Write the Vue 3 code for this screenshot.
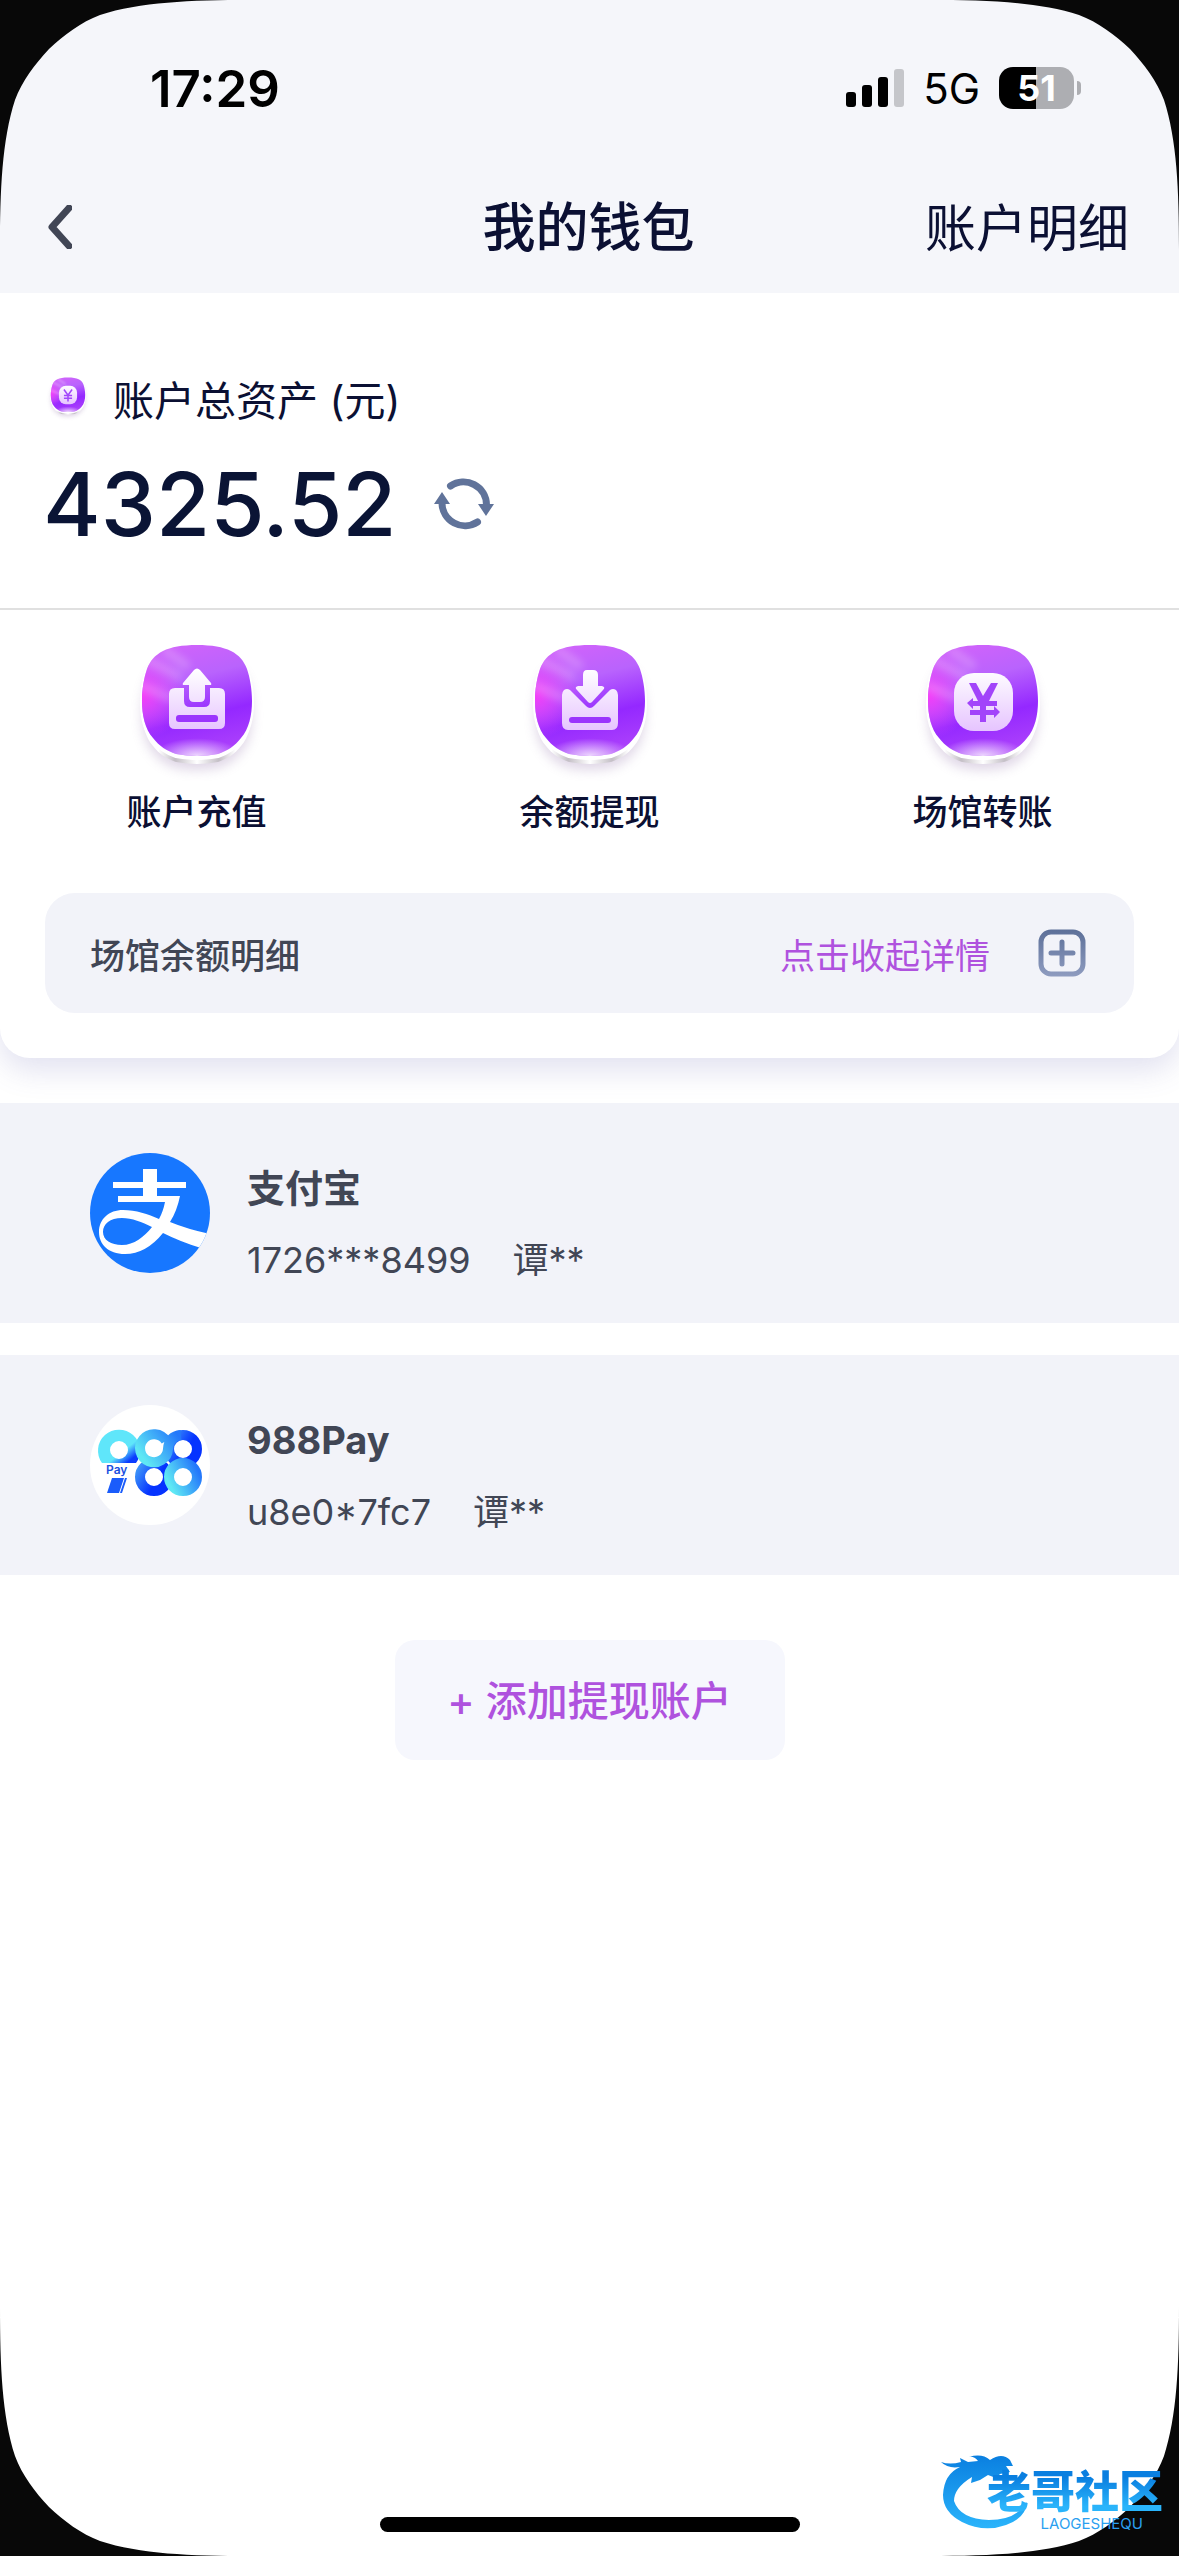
<template>
  <div class="page">
    <!-- 公用渐变与图标底座 -->
    <svg class="defs" aria-hidden="true">
      <defs>
        <linearGradient id="tile-fill" x1="0.35" y1="0" x2="0.6" y2="1">
          <stop offset="0" stop-color="#cf63fb" />
          <stop offset="0.3" stop-color="#b963fd" />
          <stop offset="0.65" stop-color="#9428ff" />
          <stop offset="1" stop-color="#ad42fb" />
        </linearGradient>
        <radialGradient id="tile-pink" cx="0" cy="0.45" r="0.4">
          <stop offset="0" stop-color="#f53cf8" />
          <stop offset="1" stop-color="#e050fb" stop-opacity="0" />
        </radialGradient>
        <radialGradient id="tile-glow" cx="0.5" cy="1" r="0.4" gradientTransform="matrix(1 0 0 0.4 0 0.6)">
          <stop offset="0" stop-color="#fff" stop-opacity="0.8" />
          <stop offset="1" stop-color="#fff" stop-opacity="0" />
        </radialGradient>
        <linearGradient id="tile-rim" x1="0" y1="0" x2="1" y2="0">
          <stop offset="0.15" stop-color="#fff" />
          <stop offset="0.3" stop-color="#c4bfc6" />
          <stop offset="0.5" stop-color="#fff" />
          <stop offset="0.7" stop-color="#c4bfc6" />
          <stop offset="0.85" stop-color="#fff" />
        </linearGradient>
        <linearGradient id="glyph-fill" x1="0" y1="38" x2="0" y2="100" gradientUnits="userSpaceOnUse">
          <stop offset="0" stop-color="#fff" />
          <stop offset="1" stop-color="#e6c4ff" />
        </linearGradient>
        <filter id="soft" x="-30%" y="-30%" width="160%" height="160%">
          <feGaussianBlur stdDeviation="6" />
        </filter>
        <filter id="streak" x="-50%" y="-50%" width="200%" height="200%">
          <feGaussianBlur stdDeviation="4" />
        </filter>
        <path
          id="tile-shape"
          d="M80 14C95 14 106 16 114 20C122 24 127 30 130 38C133 47 135 58 135 70C135 84 132 98 124 107C118 115 110 120 101 123C94 124 87 125 80 125C73 125 66 124 59 123C50 120 42 115 36 107C28 98 25 84 25 70C25 58 27 47 30 38C33 30 38 24 46 20C54 16 65 14 80 14Z"
        />
        <clipPath id="tile-clip"><use href="#tile-shape" /></clipPath>
        <g id="tile">
          <use href="#tile-shape" y="14" fill="#8f6fa8" opacity="0.28" filter="url(#soft)" />
          <use href="#tile-shape" y="8" fill="url(#tile-rim)" />
          <use href="#tile-shape" y="2" fill="#fff" stroke="#fff" stroke-width="4" />
          <use href="#tile-shape" fill="url(#tile-fill)" />
          <use href="#tile-shape" fill="url(#tile-pink)" />
          <g clip-path="url(#tile-clip)" stroke="#fff" stroke-width="7" opacity="0.26" fill="none">
            <path d="M28 28L64 46M22 54L56 68M46 18L72 36" filter="url(#streak)" />
          </g>
          <use href="#tile-shape" fill="url(#tile-glow)" />
        </g>
        <linearGradient id="plus-stroke" x1="0" y1="0" x2="0" y2="48" gradientUnits="userSpaceOnUse">
          <stop offset="0" stop-color="#5c6f98" />
          <stop offset="1" stop-color="#8f9cc0" />
        </linearGradient>
        <linearGradient id="ring-nine" x1="0" y1="0" x2="1" y2="1">
          <stop offset="0.62" stop-color="#5fe6fa" />
          <stop offset="0.84" stop-color="#0a3cff" />
        </linearGradient>
        <linearGradient id="ring-light" x1="0" y1="0.7" x2="1" y2="0.2">
          <stop offset="0" stop-color="#5fe8f4" />
          <stop offset="1" stop-color="#2478fb" />
        </linearGradient>
        <linearGradient id="ring-dark" x1="0" y1="0" x2="1" y2="0.6">
          <stop offset="0" stop-color="#3f97f8" />
          <stop offset="0.7" stop-color="#0533ff" />
        </linearGradient>
        <linearGradient id="dragon-fill" x1="0" y1="0" x2="0" y2="1">
          <stop offset="0" stop-color="#0a7fe0" />
          <stop offset="1" stop-color="#2ab4fb" />
        </linearGradient>
      </defs>
    </svg>

    <header class="top">
      <div class="status-bar">
        <span class="time">17:29</span>
        <div class="status-right">
          <svg class="signal" viewBox="0 0 58 38" aria-hidden="true">
            <rect x="0" y="23" width="10" height="15" rx="3" />
            <rect x="16" y="16" width="10" height="22" rx="3" />
            <rect x="32" y="8" width="10" height="30" rx="3" />
            <rect x="48" y="0" width="10" height="38" rx="3" fill="#c5c6ca" />
          </svg>
          <span class="network">5G</span>
          <div class="battery"><span class="battery-body">51</span><i class="battery-cap"></i></div>
        </div>
      </div>
      <nav class="nav-bar">
        <button class="back" type="button" aria-label="返回">
          <svg viewBox="0 0 24 44" aria-hidden="true">
            <path d="M21 3L4 22L21 41" />
          </svg>
        </button>
        <h1>我的钱包</h1>
        <a class="nav-link" href="#">账户明细</a>
      </nav>
    </header>

    <section class="wallet">
      <div class="asset">
        <div class="asset-label">
          <svg viewBox="0 0 160 160" aria-hidden="true">
            <use href="#tile" />
            <rect x="51" y="41" width="58" height="59" rx="22" fill="url(#glyph-fill)" />
            <path class="yen" d="M67 53L80 71L93 53M80 71V91M67 72H93M67 81H93" />
          </svg>
          <span>账户总资产 (元)</span>
        </div>
        <div class="asset-value">
          <strong>{{ balance }}</strong>
          <button class="refresh" type="button" aria-label="刷新余额">
            <svg viewBox="0 0 68 66" aria-hidden="true">
              <path class="arc" d="M20.5 15A23 23 0 0 1 56.5 34M47.5 51A23 23 0 0 1 12 32" />
              <path class="head" d="M48 33H64L56 45ZM4 33H20L12 21Z" />
            </svg>
          </button>
        </div>
      </div>

      <div class="actions">
        <button v-for="item in actions" :key="item.type" class="action" type="button">
          <svg viewBox="0 0 160 152" aria-hidden="true">
            <use href="#tile" />
            <g v-if="item.type === 'deposit'" fill="url(#glyph-fill)">
              <path d="M58 57H67V70Q67 76 73 76H87Q93 76 93 70V57H102Q108 57 108 63V92Q108 98 102 98H58Q52 98 52 92V63Q52 57 58 57Z" />
              <path d="M77 39Q80 36 83 39L94 52Q95 54 93 54H88V66Q88 71 83 71H77Q72 71 72 66V54H67Q65 54 66 52Z" />
              <rect class="slot" x="59" y="84" width="42" height="7" rx="3" />
            </g>
            <g v-else-if="item.type === 'withdraw'" fill="url(#glyph-fill)">
              <path d="M60 59L76 75Q80 79 84 75L100 59Q103 57 106 59Q108 61 108 64V92Q108 99 102 99H58Q52 99 52 92V64Q52 61 54 59Q57 57 60 59Z" />
              <path d="M77 39H83Q88 39 88 44V55H92Q96 56 93 59L82 71Q80 73 78 71L67 59Q64 56 68 55H73V44Q73 39 77 39Z" />
              <rect class="slot" x="59" y="86" width="42" height="6" rx="3" />
            </g>
            <g v-else>
              <rect x="51" y="42" width="59" height="58" rx="20" fill="url(#glyph-fill)" />
              <path class="transfer" d="M66 52H73L80 65L88 52H95L86 70H94V75H83V79H91V75L97 81L91 87V84H83V91H77V84H67V79H77V75H70V78L64 72L70 67V70H75Z" />
            </g>
          </svg>
          <span>{{ item.label }}</span>
        </button>
      </div>

      <div class="venue">
        <span class="venue-title">场馆余额明细</span>
        <button class="venue-toggle" type="button">
          <span>点击收起详情</span>
          <svg viewBox="0 0 48 48" aria-hidden="true">
            <rect x="3" y="3" width="42" height="42" rx="10" />
            <path d="M24 13V35M13 24H35" />
          </svg>
        </button>
      </div>
    </section>

    <main>
      <ul class="accounts">
        <li v-for="account in accounts" :key="account.id" class="account">
          <svg v-if="account.id === 'alipay'" class="avatar alipay" viewBox="0 0 120 120" aria-hidden="true">
            <path
              fill="#fff"
              fill-rule="evenodd"
              d="M53 16H67V29H96V35H67V43H90Q87 58 80 69Q97 76 120 81L111 95Q91 89 73 80Q56 101 35 101C18 101 9 91 9 79C9 66 19 57 33 57C46 57 58 61 69 66Q73 59 75 49H28V43H53V35H23V29H53ZM62 74C52 69 42 65 32 65C20 65 13 71 13 79C13 87 21 92 32 92C44 92 54 84 62 74Z"
            />
          </svg>
          <svg v-else class="avatar pay" viewBox="0 0 120 120" aria-hidden="true">
            <path
              fill="url(#ring-nine)"
              fill-rule="evenodd"
              d="M12 58A21 21 0 1 1 46 58ZM38 45A9 9 0 1 0 20 45A9 9 0 1 0 38 45Z"
            />
            <g fill="none" stroke-width="10">
              <circle cx="64" cy="72" r="14" stroke="url(#ring-dark)" />
              <circle cx="93" cy="44" r="14" stroke="url(#ring-dark)" />
              <circle cx="93" cy="72" r="14" stroke="url(#ring-light)" />
              <path d="M76 36A14 14 0 1 0 78 44Q79 31 91 30" stroke="url(#ring-light)" />
            </g>
            <text x="16" y="69">Pay</text>
            <path fill="#1a5cfb" d="M22 73H34L29 88H17ZM35 73H37L32 88H30Z" />
          </svg>
          <div class="account-info">
            <h2>{{ account.name }}</h2>
            <p><span>{{ account.number }}</span><span>{{ account.owner }}</span></p>
          </div>
        </li>
      </ul>
      <button class="add-account" type="button">+ 添加提现账户</button>
    </main>

    <div class="home-indicator"></div>

    <!-- 屏幕圆角 -->
    <svg v-for="corner in corners" :key="corner" class="corner" :class="corner" viewBox="0 0 250 250" aria-hidden="true">
      <path d="M0 0V250C0 190 2 140 15 100C22 81 35 64 49 49C64 35 81 22 100 15C140 2 190 0 250 0Z" />
    </svg>

    <!-- 社区水印 -->
    <div class="watermark">
      <svg viewBox="0 0 96 80" aria-hidden="true">
        <path
          fill="url(#dragon-fill)"
          d="M1 10Q10 13 21 10L20 6L28 10L38 9Q34 4 29 5Q42 1 50 8Q62 0 70 8L73 14L66 14L70 20L60 22L56 26L48 23L40 28L31 31L32 25Q14 36 14 49Q20 67 49 68Q76 68 87 50Q86 66 66 73Q44 81 22 70Q3 60 3 43Q4 22 20 15Q8 17 1 10Z"
        />
      </svg>
      <div class="watermark-text">
        <b>老哥社区</b>
        <small>LAOGESHEQU</small>
      </div>
    </div>
  </div>
</template>

<script setup>
import { ref } from 'vue'

const balance = ref('4325.52')

// 快捷操作
const actions = [
  { type: 'deposit', label: '账户充值' },
  { type: 'withdraw', label: '余额提现' },
  { type: 'transfer', label: '场馆转账' }
]

// 提现账户
const accounts = ref([
  { id: 'alipay', name: '支付宝', number: '1726***8499', owner: '谭**' },
  { id: '988pay', name: '988Pay', number: 'u8e0*7fc7', owner: '谭**' }
])

const corners = ['top-left', 'top-right', 'bottom-left', 'bottom-right']
</script>

<style>
body {
  background: #fff;
}
</style>

<style scoped>
.page {
  position: relative;
  display: flex;
  flex-direction: column;
  min-height: 100vh;
  overflow: hidden;
  background: #fff;
  color: #0b1033;
  font-family: Inter, "Noto Sans CJK SC", sans-serif;
}

.defs {
  position: absolute;
  width: 0;
  height: 0;
}

button {
  padding: 0;
  border: none;
  background: none;
  color: inherit;
  font: inherit;
  cursor: pointer;
}

svg {
  display: block;
  flex: none;
}

/* 顶部 */
.top {
  position: relative;
  z-index: 1;
  background: #f5f6fa;
}

.status-bar {
  display: flex;
  align-items: center;
  justify-content: space-between;
  height: 144px;
  padding: 16px 98px 0 150px;
  color: #000;
}

.time {
  font-size: 51px;
  font-weight: 600;
}

.status-right {
  display: flex;
  align-items: center;
  gap: 19px;
}

.signal {
  width: 58px;
  height: 38px;
}

.network {
  font-size: 42px;
}

.battery {
  display: flex;
  align-items: center;
  gap: 3px;
}

.battery-body {
  width: 75px;
  height: 42px;
  border-radius: 14px;
  background: linear-gradient(90deg, #000 50%, #adaeb2 50%);
  color: #fff;
  font-size: 36px;
  font-weight: 700;
  line-height: 42px;
  text-align: center;
}

.battery-cap {
  width: 4px;
  height: 14px;
  border-radius: 0 4px 4px 0;
  background: #adaeb2;
}

.nav-bar {
  display: grid;
  grid-template-columns: 1fr auto 1fr;
  align-items: center;
  height: 133px;
  padding: 0 50px 0 48px;
}

.back {
  justify-self: start;
}

.back svg {
  width: 24px;
  height: 44px;
}

.back path {
  fill: none;
  stroke: #414655;
  stroke-width: 7;
  stroke-linecap: round;
  stroke-linejoin: round;
}

h1 {
  margin: 0;
  padding-bottom: 6px;
  font-size: 53px;
  font-weight: 500;
}

.nav-link {
  justify-self: end;
  padding-bottom: 4px;
  color: inherit;
  font-size: 51px;
  text-decoration: none;
}

/* 钱包卡片 */
.wallet {
  padding-bottom: 45px;
  border-radius: 0 0 30px 30px;
  background: #fff;
  box-shadow: 0 12px 30px rgba(88, 88, 170, 0.18);
}

.asset {
  display: flex;
  flex-direction: column;
  gap: 18px;
  padding: 73px 43px 48px;
  border-bottom: 2px solid #e0e0e0;
}

.asset-label {
  display: flex;
  align-items: center;
  gap: 20px;
  height: 64px;
  font-size: 41px;
}

.asset-label svg {
  width: 50px;
  height: 50px;
}

.asset-label .yen {
  fill: none;
  stroke: #a347fb;
  stroke-width: 5;
}

.asset-value {
  display: flex;
  align-items: center;
  gap: 33px;
  height: 112px;
}

.asset-value strong {
  color: #0a1435;
  font-size: 88px;
  font-weight: 500;
  line-height: 112px;
}

.refresh svg {
  width: 68px;
  height: 66px;
}

.refresh .arc {
  fill: none;
  stroke: #60739a;
  stroke-width: 7;
  stroke-linecap: round;
}

.refresh .head {
  fill: #60739a;
}

.actions {
  display: grid;
  grid-template-columns: repeat(3, 1fr);
  padding: 21px 0 52px;
}

.action {
  display: flex;
  flex-direction: column;
  align-items: center;
  font-size: 35px;
  font-weight: 500;
  line-height: 58px;
}

.action svg {
  width: 160px;
  height: 152px;
  overflow: visible;
}

.action .slot {
  fill: #9b34fd;
}

.action .transfer {
  fill: #a244fa;
}

.venue {
  display: flex;
  align-items: center;
  justify-content: space-between;
  height: 120px;
  margin: 0 45px;
  padding: 0 48px 0 45px;
  border-radius: 30px;
  background: #f2f3f9;
  color: #414655;
  font-size: 35px;
}

.venue-title {
  font-weight: 500;
}

.venue-toggle {
  display: flex;
  align-items: center;
  gap: 48px;
  color: #af52de;
}

.venue-toggle svg {
  width: 48px;
  height: 48px;
  fill: none;
  stroke: url(#plus-stroke);
  stroke-width: 5;
  stroke-linecap: round;
}

/* 提现账户 */
main {
  display: flex;
  flex-direction: column;
  align-items: center;
  gap: 65px;
  padding-top: 45px;
}

.accounts {
  display: flex;
  flex-direction: column;
  gap: 32px;
  width: 100%;
  margin: 0;
  padding: 0;
  list-style: none;
}

.account {
  display: flex;
  align-items: center;
  gap: 37px;
  height: 220px;
  padding: 0 90px;
  box-sizing: border-box;
  background: #f2f3f9;
  color: #414655;
}

.avatar {
  width: 120px;
  height: 120px;
  border-radius: 50%;
}

.alipay {
  background: #1777ff;
}

.pay {
  background: #fff;
}

.pay text {
  fill: #1a4fe0;
  font-size: 12px;
  font-weight: 600;
}

.account-info {
  display: flex;
  flex-direction: column;
  gap: 16px;
  padding-top: 22px;
}

h2 {
  margin: 0;
  font-size: 38px;
  font-weight: 700;
  line-height: 56px;
}

.account-info p {
  display: flex;
  gap: 42px;
  margin: 0;
  font-size: 36px;
  line-height: 56px;
}

.add-account {
  width: 390px;
  height: 120px;
  padding-bottom: 4px;
  border-radius: 20px;
  background: #f6f7fd;
  color: #af52de;
  font-size: 41px;
  font-weight: 500;
}

.home-indicator {
  align-self: center;
  width: 420px;
  height: 15px;
  margin: auto 0 24px;
  border-radius: 8px;
  background: #000;
}

/* 屏幕圆角 */
.corner {
  position: absolute;
  z-index: 2;
  width: 250px;
  height: 250px;
  fill: #080808;
  pointer-events: none;
}

.top-left {
  top: 0;
  left: 0;
}

.top-right {
  top: 0;
  right: 0;
  transform: scaleX(-1);
}

.bottom-left {
  bottom: 0;
  left: 0;
  transform: scaleY(-1);
}

.bottom-right {
  right: 0;
  bottom: 0;
  transform: scale(-1);
}

/* 水印 */
.watermark {
  position: absolute;
  right: 16px;
  bottom: 24px;
  z-index: 3;
  display: flex;
  align-items: flex-end;
  pointer-events: none;
}

.watermark svg {
  width: 96px;
  height: 80px;
  margin-right: -49px;
}

.watermark-text {
  display: flex;
  flex-direction: column;
  align-items: flex-end;
}

.watermark b {
  background: linear-gradient(#0a7fe0 20%, #2ab4fb 80%);
  background-clip: text;
  color: transparent;
  font-size: 44px;
  font-weight: 900;
  line-height: 48px;
}

.watermark small {
  padding-right: 20px;
  color: #2b9ff0;
  font-size: 15px;
  line-height: 16px;
}
</style>
